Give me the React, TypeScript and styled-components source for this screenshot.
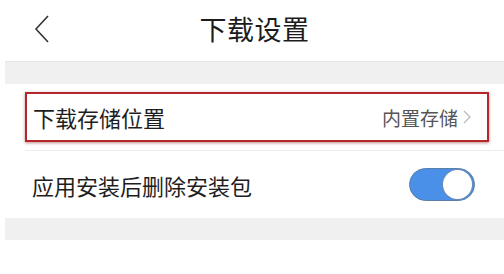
import React from "react";
import styled, { createGlobalStyle } from "styled-components";

const GlobalStyle = createGlobalStyle`
  body {
    margin: 0;
    background: #ffffff;
    font-family: "Noto Sans CJK SC", "Noto Sans", sans-serif;
  }
`;

export default function App() {
  return (
    <Root>
      <GlobalStyle />
      <Header>
        <BackButton>
          <svg width="16" height="30" viewBox="0 0 16 30">
            <path d="M14 2 L2 15 L14 28" fill="none" stroke="#333" strokeWidth="1.6" />
          </svg>
        </BackButton>
        <Title>下载设置</Title>
      </Header>
      <Band />
      <Section>
        <Highlight>
          <Label>下载存储位置</Label>
          <Value>内置存储</Value>
          <Chevron viewBox="0 0 8 14">
            <path d="M1 1 L7 7 L1 13" fill="none" stroke="#bbb" strokeWidth="1.3" />
          </Chevron>
        </Highlight>
        <Divider />
        <Row>
          <Label>应用安装后删除安装包</Label>
          <Toggle>
            <Knob />
          </Toggle>
        </Row>
      </Section>
      <Band />
    </Root>
  );
}

const Root = styled.div`
  padding-left: 5px;
  width: 499px;
`;

const Header = styled.div`
  position: relative;
  height: 62px;
  display: flex;
  align-items: center;
  justify-content: center;
  border-bottom: 1px solid #e6e6e6;
  box-sizing: border-box;
`;

const BackButton = styled.div`
  position: absolute;
  left: 29px;
  top: 14px;
  display: flex;
`;

const Title = styled.h1`
  margin: 0 0 5px 0;
  font-size: 27px;
  font-weight: 400;
  color: #1c1c1c;
  letter-spacing: 0.5px;
`;

const Band = styled.div`
  height: 22px;
  background: #f0f0f0;
`;

const Section = styled.div`
  padding-top: 8px;
`;

const Highlight = styled.div`
  margin: 0 15px 0 20px;
  height: 50px;
  box-sizing: border-box;
  border: 2px solid #b3262b;
  box-shadow: 0 1px 3px rgba(120, 0, 0, 0.45);
  display: flex;
  align-items: center;
  padding: 0 16px 0 6px;
`;

const Label = styled.div`
  flex: 1;
  font-size: 22px;
  color: #1e1e1e;
  line-height: 1;
`;

const Value = styled.div`
  font-size: 19px;
  color: #555;
  line-height: 1;
`;

const Chevron = styled.svg`
  width: 8px;
  height: 14px;
  margin-left: 5px;
`;

const Divider = styled.div`
  margin: 8px 0 0 20px;
  height: 1px;
  background: #ececec;
`;

const Row = styled.div`
  height: 67px;
  display: flex;
  align-items: center;
  padding: 0 29px 0 27px;
  box-sizing: border-box;
`;

const Toggle = styled.div`
  width: 66px;
  height: 33px;
  border-radius: 17px;
  background: #4a8fe8;
  display: flex;
  align-items: center;
  justify-content: flex-end;
  padding: 0 2px;
  box-sizing: border-box;
  border: 1px solid #5a7fa8;
`;

const Knob = styled.div`
  width: 29px;
  height: 29px;
  border-radius: 50%;
  background: #fff;
  box-shadow: 0 0 0 1px #6a8db5;
`;
